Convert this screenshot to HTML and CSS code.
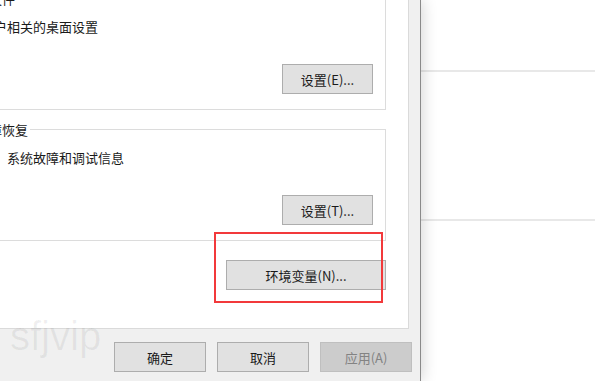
FILE: index.html
```html
<!doctype html>
<html>
<head>
<meta charset="utf-8">
<title>系统属性</title>
<link rel="stylesheet" href="styles.css">
</head>
<body>
<div id="screen">
	<div class="dialog">
		<div class="panel">
			<fieldset class="group group_first">
				<legend>用户配置文件</legend>
				<p class="desc">与登录帐户相关的桌面设置</p>
				<div class="actions"><button class="btn btn_set">设置(E)...</button></div>
			</fieldset>
			<fieldset class="group group_second">
				<legend>启动和故障恢复</legend>
				<p class="desc">系统启动、系统故障和调试信息</p>
				<div class="actions"><button class="btn btn_set">设置(T)...</button></div>
			</fieldset>
			<div class="env_row">
				<button class="btn btn_env">环境变量(N)...</button>
				<span class="mark"></span>
			</div>
		</div>
		<div class="footer">
			<button class="btn btn_foot">确定</button>
			<button class="btn btn_foot">取消</button>
			<button class="btn btn_foot" disabled>应用(A)</button>
		</div>
	</div>
	<div class="backdrop">
		<div class="bg_row bg_row1"></div>
		<div class="bg_row bg_row2"></div>
	</div>
	<div class="watermark">sfjvip</div>
</div>
</body>
</html>
```
FILE: styles.css
```css
body,div,p,fieldset,legend,button,span{margin: 0; padding: 0;}
html,body{font-family: "Noto Sans CJK SC","Liberation Sans",sans-serif; font-size: 13px;}
	body{
		width: 595px;
		height: 381px;
		overflow: hidden;
		background-color: #fff;
		color: #1a1a1a;
	}
	#screen{
		position: relative;
		display: flex;
		width: 595px;
		height: 381px;
	}
	.dialog{
		position: relative;
		z-index: 1;
		display: flex;
		flex-direction: column;
		width: 420px;
		height: 381px;
		background-color: #f0f0f0;
		border-right: 1px solid #8a8a8a;
		box-shadow: 2px 0 14px rgba(0,0,0,0.16);
	}
	.panel{
		width: 409px;
		height: 329px;
		box-sizing: border-box;
		padding-right: 22px;
		background-color: #fff;
		border-right: 1px solid #dadada;
		border-bottom: 1px solid #dadada;
	}
	.group{
		margin: 0 0 0 -70px;
		padding: 0 12px 15px 4px;
		border: 1px solid #dcdcdc;
		min-width: 0;
	}
	.group_first{
		margin-top: -10px;
	}
	.group_second{
		margin-top: 11px;
	}
	.group legend{
		padding: 0 2px;
		font-size: 13px;
		line-height: 17px;
	}
	.desc{
		padding-left: 7px;
		margin-top: 11px;
		line-height: 17px;
		white-space: nowrap;
	}
	.actions{
		display: flex;
		justify-content: flex-end;
		margin-top: 29px;
	}
	.btn{
		height: 30px;
		box-sizing: border-box;
		border: 1px solid #adadad;
		background-color: #e1e1e1;
		font-family: "Noto Sans CJK SC","Liberation Sans",sans-serif;
		font-size: 13px;
		color: #1a1a1a;
	}
	.btn_set{
		width: 91px;
	}
	.env_row{
		position: relative;
		display: flex;
		justify-content: flex-end;
		padding-top: 19px;
	}
	.btn_env{
		width: 160px;
	}
	.mark{
		position: absolute;
		left: 214px;
		top: -9px;
		width: 169px;
		height: 71px;
		box-sizing: border-box;
		border: 2px solid #f2393b;
	}
	.footer{
		display: flex;
		justify-content: flex-end;
		gap: 11px;
		padding: 13px 8px 0 0;
	}
	.btn_foot{
		width: 92px;
	}
	.btn_foot:disabled{
		background-color: #cccccc;
		border-color: #bfbfbf;
		color: #838383;
	}
	.backdrop{
		flex: 1;
		background-color: #fff;
	}
	.bg_row{
		border-bottom: 2px solid #e8e8e8;
	}
	.bg_row1{
		height: 70px;
	}
	.bg_row2{
		height: 147px;
	}
	.watermark{
		position: absolute;
		left: 10px;
		top: 316px;
		z-index: 2;
		font-family: "Liberation Sans",sans-serif;
		font-size: 40px;
		line-height: 1;
		color: rgba(0,0,0,0.06);
	}
```
